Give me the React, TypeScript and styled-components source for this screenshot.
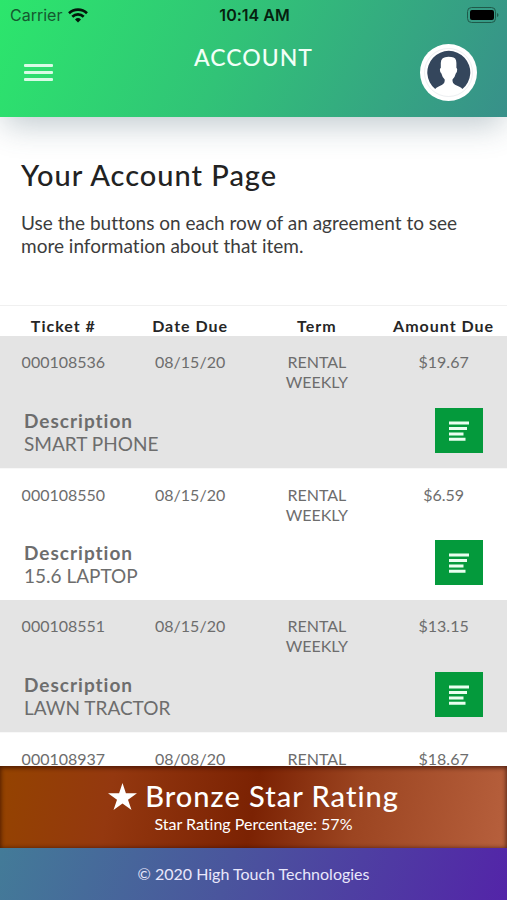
import React from "react";
import styled, { createGlobalStyle } from "styled-components";

const GlobalStyle = createGlobalStyle`
  * { box-sizing: border-box; }
  body {
    margin: 0;
    background: #fff;
    color: #2a2a2a;
    font-family: Lato, "Open Sans", sans-serif;
    font-variant-ligatures: none;
  }
  h1, h2, p { margin: 0; }
`;

const Screen = styled.div`
  display: flex;
  flex-direction: column;
  height: 100vh;
  overflow: hidden;
`;

const Header = styled.header`
  position: relative;
  z-index: 1;
  flex: none;
  padding-bottom: 16px;
  background: linear-gradient(115deg, #2ce66c 0%, #31c377 45%, #38908a 100%);
  box-shadow: 0 12px 30px -4px rgba(60, 90, 105, 0.32);
`;

const StatusBar = styled.div`
  display: grid;
  grid-template-columns: 1fr auto 1fr;
  align-items: center;
  height: 30px;
  padding: 0 8px 0 10px;
  color: #06210f;
  font-family: Inter, Roboto, sans-serif;
  font-size: 16px;
`;

const Carrier = styled.span`
  display: flex;
  align-items: center;
  gap: 6px;
  color: #15592f;
`;

const Clock = styled.time`
  font-weight: 600;
`;

const Battery = styled.svg`
  justify-self: end;
`;

const TitleBar = styled.div`
  display: grid;
  grid-template-columns: 1fr auto 1fr;
  padding: 14px 24px 0;
`;

const MenuButton = styled.button`
  display: flex;
  flex-direction: column;
  justify-content: center;
  gap: 4px;
  width: 29px;
  height: 56px;
  padding: 0;
  border: 0;
  background: none;
`;

const MenuLine = styled.span`
  height: 3px;
  border-radius: 1px;
  background: #d9fbe6;
`;

const Title = styled.h1`
  color: #f2fff7;
  font-size: 23px;
  font-weight: 500;
  line-height: 26px;
  letter-spacing: 1px;
`;

const AvatarButton = styled.button`
  justify-self: end;
  width: 57px;
  height: 57px;
  margin-right: 6px;
  padding: 0;
  border: 0;
  border-radius: 50%;
  background: none;
`;

const Main = styled.main`
  flex: 1;
  min-height: 0;
  overflow-y: auto;
  scrollbar-width: none;
`;

const Intro = styled.section`
  padding: 40px 21px 48px;
`;

const Heading = styled.h2`
  color: #222;
  font-size: 29px;
  font-weight: 500;
  line-height: 36px;
  letter-spacing: 1px;
`;

const Lead = styled.p`
  margin-top: 18px;
  color: #3c3c3c;
  font-size: 19px;
  line-height: 23px;
`;

const Agreements = styled.table`
  width: 100%;
  table-layout: fixed;
  border-collapse: separate;
  border-spacing: 0;
  border-top: 1px solid #f0f0f0;
  color: #6d6d6d;
  text-align: center;
`;

const ColumnHead = styled.th`
  height: 30px;
  padding: 9px 0 0;
  color: #262626;
  font-size: 16px;
  font-weight: 700;
  line-height: 20px;
  letter-spacing: 1px;
  white-space: nowrap;
`;

const Agreement = styled.tbody`
  background: #e4e4e4;

  &:nth-of-type(even) {
    background: #fff;
  }
  &:nth-of-type(even) > tr:first-child > td {
    border-top: 1px solid #f8f8f8;
  }
`;

const Cell = styled.td`
  height: 64px;
  padding: 16px 30px 0;
  font-size: 16px;
  line-height: 20px;
  vertical-align: top;
`;

const NumberCell = styled(Cell)`
  padding: 16px 0 0;
`;

const DescriptionCell = styled.td`
  height: 68px;
  padding: 9px 24px 0;
  font-size: 19px;
  line-height: 23px;
  text-align: left;
  vertical-align: top;
`;

const DescriptionLabel = styled.p`
  font-weight: 700;
  letter-spacing: 1px;
`;

const ActionCell = styled.td`
  padding: 8px 24px 0 0;
  text-align: right;
  vertical-align: top;
`;

const DetailsButton = styled.button`
  display: inline-flex;
  align-items: center;
  justify-content: center;
  width: 48px;
  height: 45px;
  padding: 0;
  border: 0;
  background: #049a3c;
`;

const Rating = styled.section`
  flex: none;
  padding: 12px 0 14px;
  background: linear-gradient(100deg, #944300 0%, #94380f 22%, #7b2203 50%, #9c4521 70%, #b7603d 100%);
  box-shadow: inset 0 1px 4px 1px rgba(40, 8, 0, 0.65);
  color: #fff;
  text-align: center;
`;

const RatingTitle = styled.h2`
  display: flex;
  align-items: center;
  justify-content: center;
  gap: 8px;
  font-size: 29px;
  font-weight: 500;
  line-height: 36px;
  letter-spacing: 1px;
`;

const RatingDetail = styled.p`
  font-size: 16px;
  line-height: 20px;
`;

const Footer = styled.footer`
  flex: none;
  padding: 16px 0;
  background: linear-gradient(108deg, #437b98 0%, #4a559d 45%, #5324a8 100%);
  color: #e9e7fb;
  font-size: 16px;
  line-height: 20px;
  text-align: center;
`;

const agreements = [
  { ticket: "000108536", due: "08/15/20", amount: "$19.67", item: "SMART PHONE" },
  { ticket: "000108550", due: "08/15/20", amount: "$6.59", item: "15.6 LAPTOP" },
  { ticket: "000108551", due: "08/15/20", amount: "$13.15", item: "LAWN TRACTOR" },
  { ticket: "000108937", due: "08/08/20", amount: "$18.67", item: "" },
];

function WifiIcon() {
  return (
    <svg width="20" height="15" viewBox="0 0 20 15" fill="none" stroke="#03160a" strokeWidth="2.6" aria-hidden="true">
      <path d="M1 5.2a13 13 0 0 1 18 0" />
      <path d="M4.3 8.7a8.2 8.2 0 0 1 11.4 0" />
      <path d="M10 14.5 7 11.5a4.3 4.3 0 0 1 6 0z" fill="#03160a" stroke="none" />
    </svg>
  );
}

function BatteryIcon() {
  return (
    <Battery width="33" height="16" viewBox="0 0 33 16" role="img" aria-label="Battery full">
      <rect x="1.500" y="0.5" width="28" height="15" rx="4" fill="none" stroke="#1f5a4a" />
      <rect x="4" y="3" width="24" height="10" rx="2" fill="#000" />
      <path d="M31 6v4q1.500-.5 1.500-2T31 6z" fill="#1f5a4a" />
    </Battery>
  );
}

function AvatarIcon() {
  return (
    <svg width="57" height="57" viewBox="0 0 57 57" aria-hidden="true">
      <circle cx="28.500" cy="28.500" r="28.500" fill="#fff" />
      <circle cx="28.500" cy="28.500" r="24" fill="none" stroke="#dfe2e6" strokeWidth="0.6" />
      <path
        d="M15.200 45A21.500 21.500 0 1 1 42.400 45q-1-1.500-3-2.300L35 40.700q-2.500-1.200-2.500-3.700v-1.500q2.500-2.500 3.300-6 1.400-1 1.400-4 0-1.200-.8-1.500V19q0-6-5-6-1.500-.2-3-.2-7.600 0-7.600 6.200V24q-.9.300-.9 1.500 0 3 1.500 4 .8 3.500 3.300 6V37q0 2.500-2.500 3.700l-4 2q-2 .8-3 2.300z"
        fill="#34465c"
      />
    </svg>
  );
}

function DetailsIcon() {
  return (
    <svg width="20" height="20" viewBox="0 0 20 20" fill="#e9fff0" aria-hidden="true">
      <path d="M0 .5h20v3H0zM0 6h18v3H0zM0 11.500h14.500v3H0zM0 16.800h16.500v3H0z" />
    </svg>
  );
}

function StarIcon() {
  return (
    <svg width="29" height="27" viewBox="0 0 29 27" fill="#fff" aria-hidden="true">
      <path d="M14.500 0 17.900 10.300H29L20 16.700 23.500 27 14.500 20.600 5.500 27 9 16.700 0 10.300H11.100z" />
    </svg>
  );
}

export default function App() {
  return (
    <Screen>
      <GlobalStyle />
      <Header>
        <StatusBar>
          <Carrier>
            Carrier
            <WifiIcon />
          </Carrier>
          <Clock>10:14 AM</Clock>
          <BatteryIcon />
        </StatusBar>
        <TitleBar>
          <MenuButton type="button" aria-label="Open menu">
            <MenuLine />
            <MenuLine />
            <MenuLine />
          </MenuButton>
          <Title>ACCOUNT</Title>
          <AvatarButton type="button" aria-label="Profile">
            <AvatarIcon />
          </AvatarButton>
        </TitleBar>
      </Header>
      <Main>
        <Intro>
          <Heading>Your Account Page</Heading>
          <Lead>Use the buttons on each row of an agreement to see more information about that item.</Lead>
        </Intro>
        <Agreements>
          <thead>
            <tr>
              <ColumnHead scope="col">Ticket #</ColumnHead>
              <ColumnHead scope="col">Date Due</ColumnHead>
              <ColumnHead scope="col">Term</ColumnHead>
              <ColumnHead scope="col">Amount Due</ColumnHead>
            </tr>
          </thead>
          {agreements.map((a) => (
            <Agreement key={a.ticket}>
              <tr>
                <NumberCell>{a.ticket}</NumberCell>
                <NumberCell>{a.due}</NumberCell>
                <Cell>RENTAL WEEKLY</Cell>
                <NumberCell>{a.amount}</NumberCell>
              </tr>
              {a.item && (
                <tr>
                  <DescriptionCell colSpan={3}>
                    <DescriptionLabel>Description</DescriptionLabel>
                    <p>{a.item}</p>
                  </DescriptionCell>
                  <ActionCell>
                    <DetailsButton type="button" aria-label={`Details for ${a.item}`}>
                      <DetailsIcon />
                    </DetailsButton>
                  </ActionCell>
                </tr>
              )}
            </Agreement>
          ))}
        </Agreements>
      </Main>
      <Rating>
        <RatingTitle>
          <StarIcon />
          Bronze Star Rating
        </RatingTitle>
        <RatingDetail>Star Rating Percentage: 57%</RatingDetail>
      </Rating>
      <Footer>© 2020 High Touch Technologies</Footer>
    </Screen>
  );
}
